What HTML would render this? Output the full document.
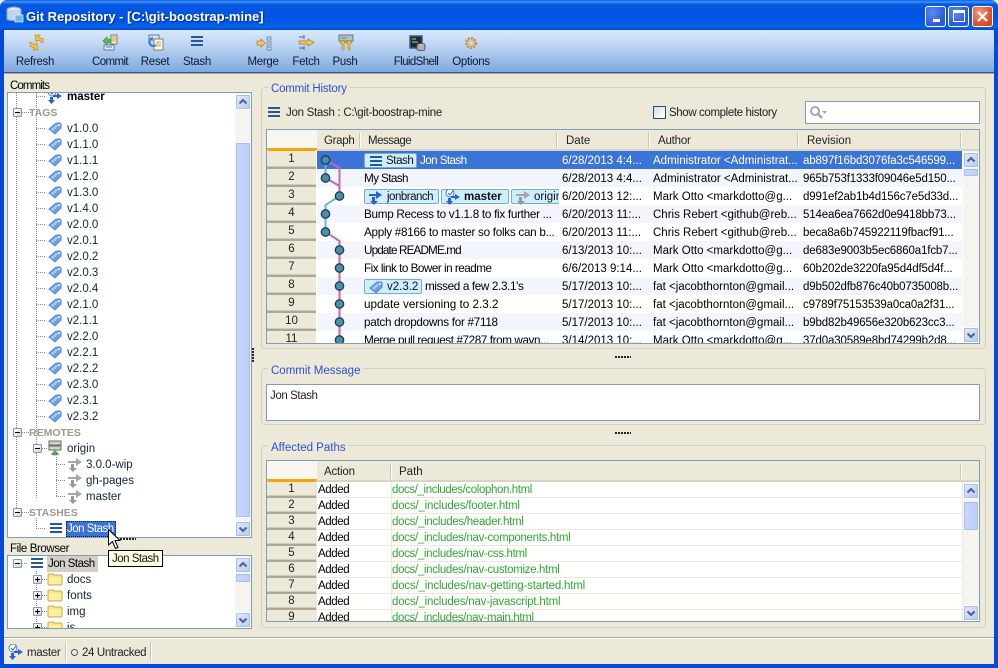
<!DOCTYPE html>
<html><head><meta charset="utf-8"><title>Git Repository</title>
<style>
*{box-sizing:border-box}
html,body{margin:0;padding:0}
body{width:998px;height:668px;position:relative;overflow:hidden;background:#ece9d8;font:11.5px/16px "Liberation Sans",sans-serif;color:#000}
div,span,svg{position:absolute}
.t{white-space:nowrap;margin-top:1px}
#title{left:0;top:0;width:998px;height:30px;background:linear-gradient(#0a5fe8 0,#3f93fa 2px,#0a5ae0 4px,#0054e3 12px,#0058e6 22px,#0a62ea 27px,#0048c8 30px);border-radius:7px 7px 0 0}
#tbar{left:4px;top:30px;width:990px;height:42px;background:linear-gradient(#d8e8fc,#c4d9f5 30%,#7fa8df);}
.tb{top:54px;height:16px;text-align:center;color:#0c1a33;transform:translateX(-50%);white-space:nowrap;letter-spacing:-.3px}
.bL{left:0;top:30px;width:4px;height:638px;background:#0549d8}
.bR{left:994px;top:30px;width:4px;height:638px;background:#0549d8}
.bB{left:0;top:664px;width:998px;height:4px;background:#0549d8}
.wb{top:6px;width:21px;height:21px;border:1px solid #fff;border-radius:3px;background:radial-gradient(circle at 35% 30%,#5c8cf2,#2a58d8 70%,#3a62d8)}
.grp{border:1px solid #d0d0bf;border-radius:4px}
.gt{color:#2a50d8;background:#ece9d8;padding:0 3px;white-space:nowrap}
.box{background:#fff;border:1px solid #7f9db9;overflow:hidden}
.hd{background:#ece9d8;height:21px;border-bottom:2px solid #d8d4c4}
.sep{width:1px;height:15px;top:3px;background:#c6c3b4;box-shadow:1px 0 0 #fff}
.hc{top:3px;white-space:nowrap;color:#222}
.num{left:0;width:49px;background:#ece9d8;border-bottom:2px solid #aca899;box-shadow:inset 0 -1px 0 #cfccbc;text-align:center;color:#222;line-height:16px}
.r{left:0;width:645px;height:18px;line-height:18px;white-space:nowrap}
.r span{top:1px;white-space:nowrap}
.r .m{font-size:11.7px}
.r .v{letter-spacing:-.15px}
.a{background:#f2f6fc}
.s{background:#3a74d6;color:#fff}
.lb{top:2px!important;height:15px;line-height:13px;background:#cdeefc;border:1px solid #7fa9c0;border-radius:2px;color:#111}
.lb b{position:absolute;top:1px;white-space:nowrap}
.lb svg{top:-1px}
.sb{background:#f5f4ee}
.bt{left:0;width:16px;height:16px;border:1px solid #fff;border-radius:2px;background:linear-gradient(135deg,#e3ebfe,#b6c9f6);box-shadow:0 0 0 1px #a9bde8 inset}
.th{left:0;width:16px;border:1px solid #f4f7ff;border-radius:2px;background:linear-gradient(90deg,#c9d8fb,#b9cdf8);box-shadow:0 0 0 1px #a9bde8 inset}
.tr{left:0;white-space:nowrap;color:#12243c;margin-top:1px}
#tree .tr,#tree .t{margin-top:0}
.cap{color:#9a9a8e;font-weight:bold;font-size:10.5px}
.pb{width:9px;height:9px;border:1px solid #7f9db9;background:linear-gradient(135deg,#fff,#d8d4c8);border-radius:1px}
.pb:before{content:"";position:absolute;left:1px;top:3px;width:5px;height:1px;background:#000}
.pp:after{content:"";position:absolute;left:3px;top:1px;width:1px;height:5px;background:#000}
.p{left:0;height:16px;line-height:15px;white-space:nowrap;margin-top:1px}
.ad{letter-spacing:-.4px}
.gp{color:#2fa82f}
.cell{background:#fff;height:15px}
</style></head>
<body>
<svg width="0" height="0" style="left:0;top:0">
<defs>
<symbol id="stash" viewBox="0 0 16 16"><path d="M2 4h12M2 8h12M2 12h12" stroke="#245a9c" stroke-width="2" fill="none"/></symbol>
<symbol id="tag" viewBox="0 0 16 16"><path d="M2 9 9 3h4l1 1v4l-6 6z" fill="#6a9fea" stroke="#5a8ce0"/><path d="M4 9 9 5h3L6 11z" fill="#a8c8f5"/><circle cx="12" cy="5" r="1" fill="#fff"/></symbol>
<symbol id="br" viewBox="0 0 16 16"><path d="M1 5h7V2l6 4-6 4V7H1z" fill="#2a60d8"/><path d="M4 8h3v4h3l-4 4-4-4h2z" fill="#2a60d8"/></symbol>
<symbol id="mbr" viewBox="0 0 16 16"><circle cx="5" cy="4" r="4" fill="#fff" stroke="#4a80d8"/><path d="M3 4l2 2 3-4" stroke="#2a60d8" fill="none"/><path d="M6 7h4V5l5 3-5 3V9H6z" fill="#2a60d8"/><path d="M3 9h3v3h2l-3.500 4-3.500-4h2z" fill="#2a60d8"/></symbol>
<symbol id="rb" viewBox="0 0 16 16"><path d="M1 5h8V2l6 4-6 4V7H1z" fill="#a6a6a4"/><path d="M4 8h3v4h3l-4 4-4-4h2z" fill="#989896"/></symbol>
<symbol id="fold" viewBox="0 0 16 16"><path d="M1 4l1-1h4l1 1h7l1 1v8l-1 1H2l-1-1z" fill="#fbe67a" stroke="#c8aa50"/><path d="M2 6h12v7H2z" fill="#fdf0a0"/></symbol>
<symbol id="up" viewBox="0 0 16 16"><path d="M4.500 9.500 8 6l3.500 3.500" stroke="#4d6185" stroke-width="2" fill="none"/></symbol>
<symbol id="dn" viewBox="0 0 16 16"><path d="M4.500 6.500 8 10l3.500-3.500" stroke="#4d6185" stroke-width="2" fill="none"/></symbol>
</defs></svg>

<!-- window chrome -->
<div id="title"></div>
<svg style="left:6px;top:6px" width="18" height="18" viewBox="0 0 18 18"><ellipse cx="8" cy="4" rx="7" ry="3" fill="#dfe8f5" stroke="#8fa5c5"/><path d="M1 4v9c0 2 14 2 14 0V4" fill="#c2d2ea" stroke="#8fa5c5"/><rect x="9" y="9" width="8" height="7" fill="#6fb6ea" stroke="#fff" stroke-width=".6"/></svg>
<div class="t" style="left:26px;top:8px;margin-top:0;color:#fff;font:bold 13px/18px 'Liberation Sans',sans-serif;text-shadow:1px 1px 1px #0a2c90">Git Repository - [C:\git-boostrap-mine]</div>
<div class="wb" style="left:925px"><div style="left:7px;top:12px;width:7px;height:3px;background:#fff"></div></div>
<div class="wb" style="left:948px"><div style="left:4px;top:3px;width:12px;height:12px;border:1px solid #fff;border-top-width:3px"></div></div>
<div class="wb" style="left:972px;background:radial-gradient(circle at 35% 30%,#f09a7a,#dc4a20 70%,#c83c14)"><svg style="left:3px;top:3px" width="13" height="13" viewBox="0 0 13 13"><path d="M2 2l9 9M11 2l-9 9" stroke="#fff" stroke-width="2.200"/></svg></div>
<div id="tbar"></div>
<div style="left:4px;top:72px;width:990px;height:1px;background:#3a4fa0"></div>
<div style="left:4px;top:73px;width:990px;height:1px;background:#aca899"></div>

<!-- toolbar icons -->
<svg style="left:28px;top:34px" width="17" height="17" viewBox="0 0 17 17"><path d="M7 1h5l-2 2 5 2v4l-3-2-3-1-1 2zM10 16H5l2-2-5-2V8l3 2 3 1 1-2z" fill="#f3c34a" stroke="#c88a20" stroke-width=".7"/></svg>
<svg style="left:102px;top:34px" width="17" height="17" viewBox="0 0 17 17"><path d="M9 1h6v9H9z" fill="#fff3d0" stroke="#8a7a50"/><path d="M10 3h4M10 5h4M10 7h4" stroke="#b0a070"/><path d="M1 7l4-4v2h4v4H5v2z" fill="#5cb84c" stroke="#3a8a3a" stroke-width=".6"/><path d="M2 11h10v5H2z" fill="#e8eef8" stroke="#5a7ab0"/><path d="M4 13h6" stroke="#5a7ab0"/></svg>
<svg style="left:148px;top:34px" width="17" height="17" viewBox="0 0 17 17"><path d="M1 1h10v5H1z" fill="#d8e4f5" stroke="#5a7ab0"/><path d="M6 5h9v11H6z" fill="#fff8e0" stroke="#8a8060"/><path d="M8 8h5M8 10h5M8 12h5" stroke="#b0a880"/><path d="M5 4a4 4 0 1 0 3 7" stroke="#2a80c0" stroke-width="2" fill="none"/></svg>
<svg style="left:189px;top:33px" width="16" height="16"><use href="#stash"/></svg>
<svg style="left:256px;top:35px" width="17" height="16" viewBox="0 0 17 16"><path d="M1 6h4V4l4 4-4 4v-2H1z" fill="#f3c860" stroke="#b08020" stroke-width=".7"/><path d="M11 2h4v3h-4zM11 7h4v3h-4zM11 12h4v3h-4z" fill="#cfd8e4" stroke="#5a7a9a" stroke-width=".7"/></svg>
<svg style="left:298px;top:34px" width="17" height="17" viewBox="0 0 17 17"><path d="M1 3h5M6 1v4M1 14h5M6 12v4" stroke="#55607a" fill="none"/><path d="M1 7h9V5l6 3.500-6 3.500v-2H1z" fill="#f3c860" stroke="#a87818" stroke-width=".7"/></svg>
<svg style="left:338px;top:34px" width="17" height="17" viewBox="0 0 17 17"><path d="M1 1h14v6H1z" fill="#b8c0c8" stroke="#6a7a80"/><path d="M3 3h6v2H3z" fill="#7ac070"/><path d="M4 16V9H2l3-3 3 3H6v7zM10 16V9H8l3-3 3 3h-2v7z" fill="#f6c850" stroke="#a87818" stroke-width=".6"/></svg>
<svg style="left:409px;top:35px" width="17" height="16" viewBox="0 0 17 16"><path d="M1 1h12v12H1z" fill="#20282c" stroke="#3a5a90" stroke-width="1.500"/><path d="M3 4h4M3 7h6" stroke="#9adf9a"/><ellipse cx="12" cy="10" rx="4" ry="1.500" fill="#c8ccd4" stroke="#555"/><path d="M8 10v4c0 2 8 2 8 0v-4" fill="#b0b4bc" stroke="#555"/></svg>
<svg style="left:464px;top:36px" width="14" height="14" viewBox="0 0 14 14"><circle cx="7" cy="7" r="4.500" fill="none" stroke="#c09050" stroke-width="3" stroke-dasharray="2 1"/><circle cx="7" cy="7" r="3" fill="none" stroke="#e8b868" stroke-width="1.500"/></svg>
<div class="tb" style="left:35px">Refresh</div>
<div class="tb" style="left:110px;letter-spacing:-.6px">Commit</div>
<div class="tb" style="left:155px">Reset</div>
<div class="tb" style="left:197px">Stash</div>
<div class="tb" style="left:263px">Merge</div>
<div class="tb" style="left:306px">Fetch</div>
<div class="tb" style="left:345px">Push</div>
<div class="tb" style="left:416px;letter-spacing:-.6px">FluidShell</div>
<div class="tb" style="left:471px">Options</div>

<!-- left: commits tree -->
<div class="t" style="left:10px;top:77px;letter-spacing:-.9px">Commits</div>
<div class="box" id="tree" style="left:7px;top:92px;width:245px;height:446px">
 <svg style="left:0;top:0" width="228" height="444"><path d="M8.500 0V416M28.500 0V405M28 3.500H38M28 35.500H38M28 51.500H38M28 67.500H38M28 83.500H38M28 99.500H38M28 115.500H38M28 131.500H38M28 147.500H38M28 163.500H38M28 179.500H38M28 195.500H38M28 211.500H38M28 227.500H38M28 243.500H38M28 259.500H38M28 275.500H38M28 291.500H38M28 307.500H38M28 323.500H38M14 19.500H24M14 339.500H24M14 419.500H24M28.500 425V435M28 435.500H38M48.500 364V403M48 403.500H58M48 371.500H58M48 387.500H58M34 355.500H40" stroke="#8a8a8a" stroke-dasharray="1 1" fill="none"/></svg>
 <div class="pb" style="left:5px;top:15px"></div><div class="pb" style="left:5px;top:335px"></div><div class="pb" style="left:5px;top:415px"></div><div class="pb" style="left:25px;top:351px"></div>
 <svg style="left:39px;top:-5px" width="16" height="16"><use href="#mbr"/></svg>
 <div class="t" style="left:59px;top:-4px"><b>master</b></div>
 <div class="t cap" style="left:21px;top:12px">TAGS</div>
 <svg style="left:39px;top:27px" width="16" height="16"><use href="#tag"/></svg><div class="tr" style="left:59px;top:28px">v1.0.0</div>
 <svg style="left:39px;top:43px" width="16" height="16"><use href="#tag"/></svg><div class="tr" style="left:59px;top:44px">v1.1.0</div>
 <svg style="left:39px;top:59px" width="16" height="16"><use href="#tag"/></svg><div class="tr" style="left:59px;top:60px">v1.1.1</div>
 <svg style="left:39px;top:75px" width="16" height="16"><use href="#tag"/></svg><div class="tr" style="left:59px;top:76px">v1.2.0</div>
 <svg style="left:39px;top:91px" width="16" height="16"><use href="#tag"/></svg><div class="tr" style="left:59px;top:92px">v1.3.0</div>
 <svg style="left:39px;top:107px" width="16" height="16"><use href="#tag"/></svg><div class="tr" style="left:59px;top:108px">v1.4.0</div>
 <svg style="left:39px;top:123px" width="16" height="16"><use href="#tag"/></svg><div class="tr" style="left:59px;top:124px">v2.0.0</div>
 <svg style="left:39px;top:139px" width="16" height="16"><use href="#tag"/></svg><div class="tr" style="left:59px;top:140px">v2.0.1</div>
 <svg style="left:39px;top:155px" width="16" height="16"><use href="#tag"/></svg><div class="tr" style="left:59px;top:156px">v2.0.2</div>
 <svg style="left:39px;top:171px" width="16" height="16"><use href="#tag"/></svg><div class="tr" style="left:59px;top:172px">v2.0.3</div>
 <svg style="left:39px;top:187px" width="16" height="16"><use href="#tag"/></svg><div class="tr" style="left:59px;top:188px">v2.0.4</div>
 <svg style="left:39px;top:203px" width="16" height="16"><use href="#tag"/></svg><div class="tr" style="left:59px;top:204px">v2.1.0</div>
 <svg style="left:39px;top:219px" width="16" height="16"><use href="#tag"/></svg><div class="tr" style="left:59px;top:220px">v2.1.1</div>
 <svg style="left:39px;top:235px" width="16" height="16"><use href="#tag"/></svg><div class="tr" style="left:59px;top:236px">v2.2.0</div>
 <svg style="left:39px;top:251px" width="16" height="16"><use href="#tag"/></svg><div class="tr" style="left:59px;top:252px">v2.2.1</div>
 <svg style="left:39px;top:267px" width="16" height="16"><use href="#tag"/></svg><div class="tr" style="left:59px;top:268px">v2.2.2</div>
 <svg style="left:39px;top:283px" width="16" height="16"><use href="#tag"/></svg><div class="tr" style="left:59px;top:284px">v2.3.0</div>
 <svg style="left:39px;top:299px" width="16" height="16"><use href="#tag"/></svg><div class="tr" style="left:59px;top:300px">v2.3.1</div>
 <svg style="left:39px;top:315px" width="16" height="16"><use href="#tag"/></svg><div class="tr" style="left:59px;top:316px">v2.3.2</div>
 <div class="t cap" style="left:21px;top:332px">REMOTES</div>
 <svg style="left:39px;top:347px" width="16" height="16" viewBox="0 0 16 16"><path d="M2 1h12v4H2zM2 6h12v4H2z" fill="#d0d4c8" stroke="#6a6a6a"/><path d="M8 10v3M4 14h8" stroke="#3a7a3a"/><rect x="6" y="12" width="4" height="3" fill="#5aaa5a" stroke="#2a6a2a" stroke-width=".5"/></svg>
 <div class="tr" style="left:59px;top:348px">origin</div>
 <svg style="left:59px;top:363px" width="16" height="16"><use href="#rb"/></svg><div class="tr" style="left:78px;top:364px">3.0.0-wip</div>
 <svg style="left:59px;top:379px" width="16" height="16"><use href="#rb"/></svg><div class="tr" style="left:78px;top:380px">gh-pages</div>
 <svg style="left:59px;top:395px" width="16" height="16"><use href="#rb"/></svg><div class="tr" style="left:78px;top:396px">master</div>
 <div class="t cap" style="left:21px;top:412px">STASHES</div>
 <svg style="left:40px;top:427px" width="16" height="16"><use href="#stash"/></svg>
 <div class="t" style="left:58px;top:428px;width:50px;height:16px;background:#3a74d6;color:#fff;outline:1px dotted #102040;outline-offset:-1px;padding-left:1px;letter-spacing:-.5px">Jon Stash</div>
 <div class="sb" style="left:227px;top:0;width:16px;height:444px">
  <div class="bt" style="top:1px"><svg style="left:-1px;top:-1px" width="16" height="16"><use href="#up"/></svg></div>
  <div class="th" style="top:49px;height:376px"></div>
  <div class="bt" style="top:428px"><svg style="left:-1px;top:-1px" width="16" height="16"><use href="#dn"/></svg></div>
 </div>
</div>
<div style="left:120px;top:538px;width:16px;height:2px;background:repeating-linear-gradient(90deg,#223 0 2px,transparent 2px 3px)"></div>
<div style="left:252px;top:348px;width:2px;height:14px;background:repeating-linear-gradient(#223 0 2px,transparent 2px 3px)"></div>

<!-- left: file browser -->
<div class="t" style="left:10px;top:540px;letter-spacing:-.4px">File Browser</div>
<div class="box" style="left:7px;top:555px;width:245px;height:74px">
 <svg style="left:0;top:0" width="228" height="72"><path d="M14 7.500H20M28.500 15V72M34 23.500H40M34 39.500H40M34 55.500H40M34 71.500H40" stroke="#8a8a8a" stroke-dasharray="1 1" fill="none"/></svg>
 <div class="pb" style="left:5px;top:3px"></div>
 <div class="pb pp" style="left:25px;top:19px"></div><div class="pb pp" style="left:25px;top:35px"></div><div class="pb pp" style="left:25px;top:51px"></div><div class="pb pp" style="left:25px;top:67px"></div>
 <svg style="left:21px;top:-1px" width="16" height="16"><use href="#stash"/></svg>
 <div class="t" style="left:39px;top:-1px;width:51px;height:16px;background:#d4d0c8;padding-left:1px;letter-spacing:-.5px">Jon Stash</div>
 <svg style="left:39px;top:15px" width="16" height="16"><use href="#fold"/></svg><div class="tr" style="left:59px;top:15px">docs</div>
 <svg style="left:39px;top:31px" width="16" height="16"><use href="#fold"/></svg><div class="tr" style="left:59px;top:31px">fonts</div>
 <svg style="left:39px;top:47px" width="16" height="16"><use href="#fold"/></svg><div class="tr" style="left:59px;top:47px">img</div>
 <svg style="left:39px;top:63px" width="16" height="16"><use href="#fold"/></svg><div class="tr" style="left:59px;top:63px">js</div>
 <div class="sb" style="left:227px;top:0;width:16px;height:72px">
  <div class="bt" style="top:1px"><svg style="left:-1px;top:-1px" width="16" height="16"><use href="#up"/></svg></div>
  <div class="th" style="top:17px;height:10px"></div>
  <div class="bt" style="top:56px"><svg style="left:-1px;top:-1px" width="16" height="16"><use href="#dn"/></svg></div>
 </div>
</div>

<!-- tooltip and cursor -->
<div class="t" style="left:108px;top:550px;margin-top:0;width:55px;height:17px;background:#ffffe1;border:1px solid #000;line-height:16px;padding-left:3px;color:#111;letter-spacing:-.5px">Jon Stash</div>
<svg style="left:108px;top:529px" width="13" height="21" viewBox="0 0 13 21"><path d="M.5.500V16l4-3.500 3 7 2.500-1-3-7H12z" fill="#fff" stroke="#000"/></svg>

<!-- status bar -->
<div style="left:4px;top:637px;width:990px;height:1px;background:#aca899"></div>
<div style="left:4px;top:638px;width:990px;height:1px;background:#fff"></div>
<svg style="left:8px;top:644px" width="16" height="16"><use href="#mbr"/></svg>
<div class="t" style="left:27px;top:644px;color:#222;letter-spacing:-.3px">master</div>
<div style="left:65px;top:643px;width:1px;height:18px;background:#c6c3b4;box-shadow:1px 0 0 #fff"></div>
<div style="left:71px;top:649px;width:7px;height:7px;border:1px solid #555;border-radius:50%;background:#eee"></div>
<div class="t" style="left:82px;top:644px;color:#222;letter-spacing:-.35px">24 Untracked</div>
<div style="left:150px;top:643px;width:1px;height:18px;background:#c6c3b4;box-shadow:1px 0 0 #fff"></div>

<!-- commit history -->
<div class="grp" style="left:261px;top:87px;width:725px;height:262px"></div>
<div class="t gt" style="left:268px;top:80px;letter-spacing:-.2px">Commit&nbsp;History</div>
<svg style="left:266px;top:104px" width="16" height="16"><use href="#stash"/></svg>
<div class="t" style="left:286px;top:104px;color:#222;letter-spacing:-.28px">Jon Stash : C:\git-boostrap-mine</div>
<div style="left:653px;top:106px;width:13px;height:13px;border:1px solid #1c5180;background:linear-gradient(135deg,#dcdcd7,#fff)"></div>
<div class="t" style="left:669px;top:104px;color:#222;letter-spacing:-.38px">Show complete history</div>
<div style="left:805px;top:101px;width:175px;height:23px;background:#fff;border:1px solid #7f9db9"><svg style="left:3px;top:3px" width="18" height="16" viewBox="0 0 18 16"><circle cx="6" cy="6" r="4" fill="none" stroke="#a8a8a8" stroke-width="2"/><path d="M9 9l4 4" stroke="#a8a8a8" stroke-width="2.500"/><path d="M13 6h5l-2.500 3z" fill="#a8a8a8"/></svg></div>

<div class="box" style="left:266px;top:129px;width:714px;height:215px">
 <div class="hd" style="left:0;top:0;width:712px"></div>
 <div style="left:0;top:0;width:50px;height:21px;background:#f7f6f0;border-bottom:3px solid #f8a400;border-radius:0 0 3px 3px"></div>
 <div class="sep" style="left:92px"></div><div class="sep" style="left:289px"></div><div class="sep" style="left:381px"></div><div class="sep" style="left:530px"></div><div class="sep" style="left:693px"></div>
 <div class="hc" style="left:57px;letter-spacing:-.3px">Graph</div><div class="hc" style="left:101px;letter-spacing:-.5px">Message</div><div class="hc" style="left:299px">Date</div><div class="hc" style="left:391px;letter-spacing:-.2px">Author</div><div class="hc" style="left:540px">Revision</div>
 <div style="left:0;top:21px;width:50px;height:192px;overflow:hidden">
  <div class="num" style="top:0;height:18px">1</div><div class="num" style="top:18px;height:18px">2</div><div class="num" style="top:36px;height:18px">3</div><div class="num" style="top:54px;height:18px">4</div><div class="num" style="top:72px;height:18px">5</div><div class="num" style="top:90px;height:18px">6</div><div class="num" style="top:108px;height:18px">7</div><div class="num" style="top:126px;height:18px">8</div><div class="num" style="top:144px;height:18px">9</div><div class="num" style="top:162px;height:18px">10</div><div class="num" style="top:180px;height:18px">11</div>
 </div>
 <div style="left:50px;top:21px;width:645px;height:192px;overflow:hidden;background:#fff">
  <div class="r s" style="top:0"><div class="lb" style="left:47px;top:2px;width:53px"><svg style="left:3px;top:-1px" width="16" height="16"><use href="#stash"/></svg><b style="left:21px;font-weight:normal;letter-spacing:-.4px">Stash</b></div><span class="m" style="left:103px;letter-spacing:-.6px">Jon Stash</span><span style="left:245px">6/28/2013 4:4...</span><span style="left:336px">Administrator &lt;Administrat...</span><span class="v" style="left:486px">ab897f16bd3076fa3c546599...</span></div>
  <div class="r a" style="top:18px"><span class="m" style="left:47px;letter-spacing:-.6px">My Stash</span><span style="left:245px">6/28/2013 4:4...</span><span style="left:336px">Administrator &lt;Administrat...</span><span class="v" style="left:486px">965b753f1333f09046e5d150...</span></div>
  <div class="r" style="top:36px"><div style="left:47px;top:0;width:195px;height:18px;overflow:hidden"><div class="lb" style="left:0;top:2px;width:75px"><svg style="left:3px;top:-1px" width="16" height="16"><use href="#br"/></svg><b style="left:22px;font-weight:normal;letter-spacing:-.5px">jonbranch</b></div><div class="lb" style="left:77px;top:2px;width:68px"><svg style="left:3px;top:-1px" width="16" height="16"><use href="#mbr"/></svg><b style="left:22px">master</b></div><div class="lb" style="left:147px;top:2px;width:60px"><svg style="left:3px;top:-1px" width="16" height="16"><use href="#rb"/></svg><b style="left:22px;font-weight:normal">origin</b></div></div><span style="left:245px">6/20/2013 12:...</span><span style="left:336px">Mark Otto &lt;markdotto@g...</span><span class="v" style="left:486px">d991ef2ab1b4d156c7e5d33d...</span></div>
  <div class="r a" style="top:54px"><span class="m" style="left:47px;letter-spacing:-.28px">Bump Recess to v1.1.8 to fix further ...</span><span style="left:245px">6/20/2013 11:...</span><span style="left:336px">Chris Rebert &lt;github@reb...</span><span class="v" style="left:486px">514ea6ea7662d0e9418bb73...</span></div>
  <div class="r" style="top:72px"><span class="m" style="left:47px;letter-spacing:-.28px">Apply #8166 to master so folks can b...</span><span style="left:245px">6/20/2013 11:...</span><span style="left:336px">Chris Rebert &lt;github@reb...</span><span class="v" style="left:486px">beca8a6b745922119fbacf91...</span></div>
  <div class="r a" style="top:90px"><span class="m" style="left:47px;letter-spacing:-.85px">Update README.md</span><span style="left:245px">6/13/2013 10:...</span><span style="left:336px">Mark Otto &lt;markdotto@g...</span><span class="v" style="left:486px">de683e9003b5ec6860a1fcb7...</span></div>
  <div class="r" style="top:108px"><span class="m" style="left:47px;letter-spacing:-.5px">Fix link to Bower in readme</span><span style="left:245px">6/6/2013 9:14...</span><span style="left:336px">Mark Otto &lt;markdotto@g...</span><span class="v" style="left:486px">60b202de3220fa95d4df5d4f...</span></div>
  <div class="r a" style="top:126px"><div class="lb" style="left:47px;top:2px;width:58px"><svg style="left:3px;top:-1px" width="16" height="16"><use href="#tag"/></svg><b style="left:22px;font-weight:normal">v2.3.2</b></div><span class="m" style="left:108px;letter-spacing:-.35px">missed a few 2.3.1's</span><span style="left:245px">5/17/2013 10:...</span><span style="left:336px">fat &lt;jacobthornton@gmail...</span><span class="v" style="left:486px">d9b502dfb876c40b0735008b...</span></div>
  <div class="r" style="top:144px"><span class="m" style="left:47px">update versioning to 2.3.2</span><span style="left:245px">5/17/2013 10:...</span><span style="left:336px">fat &lt;jacobthornton@gmail...</span><span class="v" style="left:486px">c9789f75153539a0ca0a2f31...</span></div>
  <div class="r a" style="top:162px"><span class="m" style="left:47px;letter-spacing:-.28px">patch dropdowns for #7118</span><span style="left:245px">5/17/2013 10:...</span><span style="left:336px">fat &lt;jacobthornton@gmail...</span><span class="v" style="left:486px">b9bd82b49656e320b623cc3...</span></div>
  <div class="r" style="top:180px"><span class="m" style="left:47px;letter-spacing:-.4px">Merge pull request #7287 from wayn...</span><span style="left:245px">3/14/2013 10:...</span><span style="left:336px">Mark Otto &lt;markdotto@g...</span><span class="v" style="left:486px">37d0a30589e8bd74299b2d8...</span></div>
  <svg style="left:0;top:0" width="43" height="192">
   <path d="M8.500 9V27M22.500 45L8.500 54V81" stroke="#6fb4cc" stroke-width="2" fill="none"/>
   <path d="M8.500 9L22.500 17V45M8.500 27L22.500 35M8.500 81L22.500 90V192" stroke="#c766b4" stroke-width="2" fill="none"/>
   <g fill="#4a90a8" stroke="#1c3c50" stroke-width="1.300"><circle cx="8.500" cy="9" r="4.200"/><circle cx="8.500" cy="27" r="4.200"/><circle cx="22.500" cy="45" r="4.200"/><circle cx="8.500" cy="63" r="4.200"/><circle cx="8.500" cy="81" r="4.200"/><circle cx="22.500" cy="99" r="4.200"/><circle cx="22.500" cy="117" r="4.200"/><circle cx="22.500" cy="135" r="4.200"/><circle cx="22.500" cy="153" r="4.200"/><circle cx="22.500" cy="171" r="4.200"/><circle cx="22.500" cy="189" r="4.200"/></g>
  </svg>
 </div>
 <div class="sb" style="left:696px;top:21px;width:16px;height:192px">
  <div class="bt" style="top:1px"><svg style="left:-1px;top:-1px" width="16" height="16"><use href="#up"/></svg></div>
  <div class="th" style="top:17px;height:9px"></div>
  <div class="bt" style="top:176px"><svg style="left:-1px;top:-1px" width="16" height="16"><use href="#dn"/></svg></div>
 </div>
</div>
<div style="left:615px;top:356px;width:16px;height:2px;background:repeating-linear-gradient(90deg,#223 0 2px,transparent 2px 3px)"></div>

<!-- commit message -->
<div class="grp" style="left:261px;top:368px;width:725px;height:57px"></div>
<div class="t gt" style="left:268px;top:362px">Commit Message</div>
<div class="box" style="left:266px;top:384px;width:714px;height:37px;padding:2px"><div class="t" style="left:3px;top:2px;color:#222;letter-spacing:-.4px">Jon Stash</div></div>
<div style="left:615px;top:432px;width:16px;height:2px;background:repeating-linear-gradient(90deg,#223 0 2px,transparent 2px 3px)"></div>

<!-- affected paths -->
<div class="grp" style="left:261px;top:445px;width:725px;height:183px"></div>
<div class="t gt" style="left:268px;top:439px">Affected Paths</div>
<div class="box" style="left:266px;top:460px;width:714px;height:162px;background:#ece9d8">
 <div class="hd" style="left:0;top:0;width:712px"></div>
 <div style="left:0;top:0;width:50px;height:21px;background:#f7f6f0;border-bottom:3px solid #f8a400;border-radius:0 0 3px 3px"></div>
 <div class="sep" style="left:123px"></div><div class="sep" style="left:693px"></div>
 <div class="hc" style="left:57px;letter-spacing:-.2px">Action</div><div class="hc" style="left:132px">Path</div>
 <div style="left:0;top:21px;width:50px;height:139px;overflow:hidden">
  <div class="num" style="top:0;height:16px;line-height:14px">1</div><div class="num" style="top:16px;height:16px;line-height:14px">2</div><div class="num" style="top:32px;height:16px;line-height:14px">3</div><div class="num" style="top:48px;height:16px;line-height:14px">4</div><div class="num" style="top:64px;height:16px;line-height:14px">5</div><div class="num" style="top:80px;height:16px;line-height:14px">6</div><div class="num" style="top:96px;height:16px;line-height:14px">7</div><div class="num" style="top:112px;height:16px;line-height:14px">8</div><div class="num" style="top:128px;height:16px;line-height:14px">9</div>
 </div>
 <div style="left:50px;top:21px;width:645px;height:139px;overflow:hidden;background:#ece9d8">
  <div class="cell" style="left:0;top:0;width:74px"></div><div class="cell" style="left:75px;top:0;width:570px"></div>
  <div class="cell" style="left:0;top:16px;width:74px"></div><div class="cell" style="left:75px;top:16px;width:570px"></div>
  <div class="cell" style="left:0;top:32px;width:74px"></div><div class="cell" style="left:75px;top:32px;width:570px"></div>
  <div class="cell" style="left:0;top:48px;width:74px"></div><div class="cell" style="left:75px;top:48px;width:570px"></div>
  <div class="cell" style="left:0;top:64px;width:74px"></div><div class="cell" style="left:75px;top:64px;width:570px"></div>
  <div class="cell" style="left:0;top:80px;width:74px"></div><div class="cell" style="left:75px;top:80px;width:570px"></div>
  <div class="cell" style="left:0;top:96px;width:74px"></div><div class="cell" style="left:75px;top:96px;width:570px"></div>
  <div class="cell" style="left:0;top:112px;width:74px"></div><div class="cell" style="left:75px;top:112px;width:570px"></div>
  <div class="cell" style="left:0;top:128px;width:74px"></div><div class="cell" style="left:75px;top:128px;width:570px"></div>
  <div class="p ad" style="left:1px;top:0">Added</div><div class="p gp" style="left:75px;top:0;letter-spacing:-.39px">docs/_includes/colophon.html</div>
  <div class="p ad" style="left:1px;top:16px">Added</div><div class="p gp" style="left:75px;top:16px;letter-spacing:-.2px">docs/_includes/footer.html</div>
  <div class="p ad" style="left:1px;top:32px">Added</div><div class="p gp" style="left:75px;top:32px;letter-spacing:-.3px">docs/_includes/header.html</div>
  <div class="p ad" style="left:1px;top:48px">Added</div><div class="p gp" style="left:75px;top:48px;letter-spacing:-.32px">docs/_includes/nav-components.html</div>
  <div class="p ad" style="left:1px;top:64px">Added</div><div class="p gp" style="left:75px;top:64px;letter-spacing:-.33px">docs/_includes/nav-css.html</div>
  <div class="p ad" style="left:1px;top:80px">Added</div><div class="p gp" style="left:75px;top:80px;letter-spacing:-.33px">docs/_includes/nav-customize.html</div>
  <div class="p ad" style="left:1px;top:96px">Added</div><div class="p gp" style="left:75px;top:96px;letter-spacing:-.18px">docs/_includes/nav-getting-started.html</div>
  <div class="p ad" style="left:1px;top:112px">Added</div><div class="p gp" style="left:75px;top:112px;letter-spacing:-.2px">docs/_includes/nav-javascript.html</div>
  <div class="p ad" style="left:1px;top:128px">Added</div><div class="p gp" style="left:75px;top:128px;letter-spacing:-.35px">docs/_includes/nav-main.html</div>
 </div>
 <div class="sb" style="left:696px;top:21px;width:16px;height:139px">
  <div class="bt" style="top:1px"><svg style="left:-1px;top:-1px" width="16" height="16"><use href="#up"/></svg></div>
  <div class="th" style="top:19px;height:30px"></div>
  <div class="bt" style="top:123px"><svg style="left:-1px;top:-1px" width="16" height="16"><use href="#dn"/></svg></div>
 </div>
</div>

<div class="bL"></div><div class="bR"></div><div class="bB"></div>
</body></html>
